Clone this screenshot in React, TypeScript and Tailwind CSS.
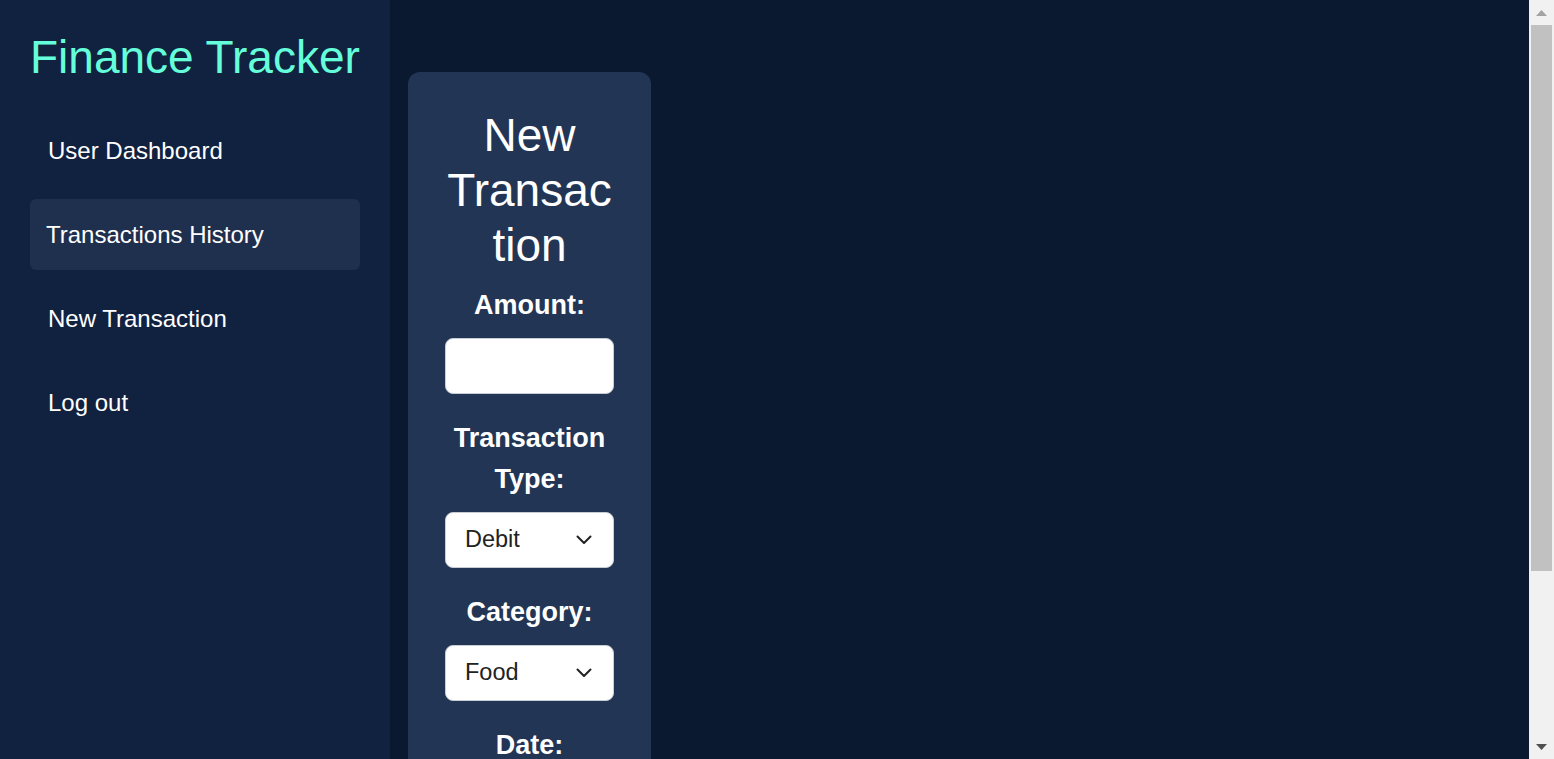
import React, { useState } from "react";

const navItems = ["User Dashboard", "Transactions History", "New Transaction", "Log out"];

function Chevron() {
  return (
    <svg
      className="pointer-events-none absolute right-[22px] top-1/2 -translate-y-1/2"
      width="16"
      height="10"
      viewBox="0 0 16 10"
      fill="none"
    >
      <path d="M1.5 1.5 8 8l6.5-6.5" stroke="#222" strokeWidth="2" strokeLinecap="round" strokeLinejoin="round" />
    </svg>
  );
}

// classic scrollbar look from the screenshot
function FakeScrollbar() {
  return (
    <div className="flex h-full w-[25px] shrink-0 flex-col bg-[#f1f1f1]">
      <div className="flex h-[25px] items-center justify-center">
        <svg width="11" height="6" viewBox="0 0 11 6">
          <polygon points="5.5,0 11,6 0,6" fill="#a3a3a3" />
        </svg>
      </div>
      <div className="flex-1 px-[2px]">
        <div className="h-[546px] bg-[#c1c1c1]" />
      </div>
      <div className="flex h-[25px] items-center justify-center">
        <svg width="11" height="6" viewBox="0 0 11 6">
          <polygon points="0,0 11,0 5.5,6" fill="#505050" />
        </svg>
      </div>
    </div>
  );
}

export default function App() {
  const [amount, setAmount] = useState("");
  const [type, setType] = useState("Debit");
  const [category, setCategory] = useState("Food");
  const [date, setDate] = useState("");
  const active = "Transactions History";

  const labelCls = "block text-center text-[27px] leading-[41px] font-bold text-white mb-3";
  const fieldCls =
    "w-full h-[56px] rounded-lg border border-[#c8ccd4] bg-white px-[19px] text-[23.5px] text-[#222] outline-none appearance-none mb-6";

  return (
    <div className="flex h-screen bg-[#0a192f]" style={{ fontFamily: '"Liberation Sans", Arial, sans-serif' }}>
      <div className="flex-1 overflow-y-auto [scrollbar-width:none]">
        <div className="flex min-h-full">
          {/* Sidebar */}
          <aside className="w-[390px] shrink-0 bg-[#112240] px-[30px] pt-[31px]">
            <h1 className="text-[46px] leading-[52px] text-[#64ffda] whitespace-nowrap">Finance Tracker</h1>
            <nav className="mt-[32px] flex flex-col gap-[13px]">
              {navItems.map((item) => (
                <a
                  key={item}
                  href="#"
                  className={
                    item === active
                      ? "flex h-[71px] items-center rounded-md bg-[#1f2f4e] pl-4 text-[24px] text-white"
                      : "flex h-[71px] items-center rounded-md pl-[18px] text-[24px] text-white"
                  }
                >
                  {item}
                </a>
              ))}
            </nav>
          </aside>

          {/* Main */}
          <main className="flex-1 pl-[18px] pt-[72px] pb-[18px]">
            <form
              className="w-[243px] rounded-xl bg-[#233554] px-[37px] pt-[36px] pb-[36px]"
              onSubmit={(e) => e.preventDefault()}
            >
              <h2 className="mb-3 text-center text-[46px] leading-[55px] text-white break-words">New Transaction</h2>

              <label className={labelCls}>Amount:</label>
              <input className={fieldCls} type="text" value={amount} onChange={(e) => setAmount(e.target.value)} />

              <label className={labelCls}>Transaction Type:</label>
              <div className="relative">
                <select className={fieldCls} value={type} onChange={(e) => setType(e.target.value)}>
                  <option>Debit</option>
                  <option>Credit</option>
                </select>
                <div className="absolute inset-x-0 top-0 h-[56px]">
                  <Chevron />
                </div>
              </div>

              <label className={labelCls}>Category:</label>
              <div className="relative">
                <select className={fieldCls} value={category} onChange={(e) => setCategory(e.target.value)}>
                  <option>Food</option>
                  <option>Transport</option>
                  <option>Shopping</option>
                  <option>Bills</option>
                  <option>Other</option>
                </select>
                <div className="absolute inset-x-0 top-0 h-[56px]">
                  <Chevron />
                </div>
              </div>

              <label className={labelCls}>Date:</label>
              <input className={fieldCls} type="date" value={date} onChange={(e) => setDate(e.target.value)} />

              <button
                type="submit"
                className="h-[56px] w-full rounded-lg bg-[#64ffda] text-[23.5px] font-bold text-[#0a192f]"
              >
                Submit
              </button>
            </form>
          </main>
        </div>
      </div>
      <FakeScrollbar />
    </div>
  );
}
